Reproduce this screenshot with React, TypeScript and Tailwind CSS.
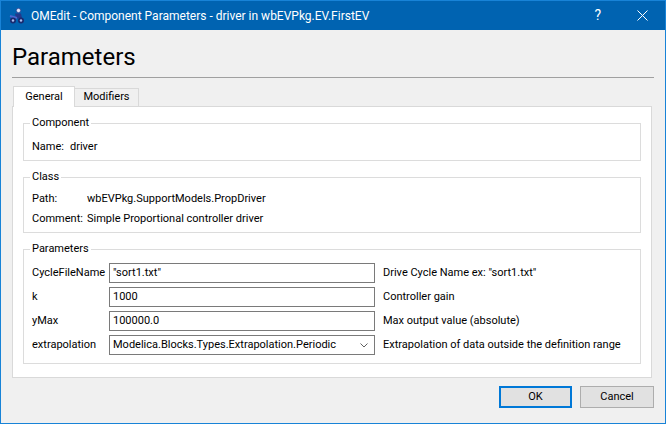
import React from "react";

const ui = "font-['Segoe_UI',Roboto,sans-serif]";

// 参数表的行
const params = [
  { name: "CycleFileName", value: '"sort1.txt"', desc: 'Drive Cycle Name ex: "sort1.txt"' },
  { name: "k", value: "1000", desc: "Controller gain" },
  { name: "yMax", value: "100000.0", desc: "Max output value (absolute)" },
];

function AppIcon() {
  return (
    <svg width="16" height="16" viewBox="0 0 16 16">
      <circle cx="9.5" cy="2.5" r="2.2" fill="#dfe6fb" stroke="#2a3f8f" strokeWidth="0.8" />
      <path d="M6 5.5 L12 5.5 L13 10 L7 10.5 Z" fill="#23388a" />
      <path d="M1 8 L8 10" stroke="#4c66d0" strokeWidth="2" />
      <circle cx="4" cy="12.5" r="3" fill="#1a2b70" />
      <circle cx="12" cy="12.5" r="3" fill="#1a2b70" />
      <circle cx="4" cy="12.5" r="1.2" fill="#aebfee" />
      <circle cx="12" cy="12.5" r="1.2" fill="#aebfee" />
    </svg>
  );
}

function GroupBox({
  title,
  className,
  children,
}: {
  title: string;
  className?: string;
  children: React.ReactNode;
}) {
  return (
    <fieldset className={`border border-[#dcdcdc] px-[8px] ${className ?? ""}`}>
      <legend className="-ml-[2px] px-[2px] h-[16px] leading-[16px]">{title}</legend>
      {children}
    </fieldset>
  );
}

export default function App() {
  return (
    <div className={`${ui} text-[11px] text-black w-[666px] h-[424px] border border-[#1883d7] bg-[#f0f0f0] flex flex-col`}>
      {/* title bar */}
      <div className="h-[29px] bg-[#0063b1] flex items-center text-white shrink-0">
        <div className="ml-[8px] w-[16px] h-[16px]">
          <AppIcon />
        </div>
        <span className="ml-[6px] text-[12px]">
          OMEdit - Component Parameters - driver in wbEVPkg.EV.FirstEV
        </span>
        <span className="ml-auto mr-[36px] text-[14px]">?</span>
        <svg className="mr-[17px]" width="11" height="11" viewBox="0 0 11 11">
          <path d="M0.5 0.5 L10.5 10.5 M10.5 0.5 L0.5 10.5" stroke="white" strokeWidth="1" />
        </svg>
      </div>

      <div className="pl-[11px] flex flex-col">
        <h1 className="mt-[11px] h-[32px] leading-[32px] text-[24px]">Parameters</h1>
        <div className="mt-[4px] w-[642px] h-px bg-[#a0a0a0]" />

        {/* tabs */}
        <div className="mt-[8px] h-[20px] flex items-end pl-[1px]">
          <div className="relative z-10 -mb-px h-[21px] w-[62px] bg-white border border-b-0 border-[#d9d9d9] flex items-center justify-center">
            General
          </div>
          <div className="h-[18px] w-[64px] bg-[#f0f0f0] border border-b-0 border-l-0 border-[#d9d9d9] flex items-center justify-center">
            Modifiers
          </div>
        </div>

        <div className="w-[640px] bg-white border border-[#d9d9d9] px-[10px] pt-[8px] pb-[13px] flex flex-col">
          <GroupBox title="Component" className="pt-[8px] pb-[5px]">
            <div className="h-[16px] leading-[16px] flex">
              <span className="w-[38px]">Name:</span>
              <span>driver</span>
            </div>
          </GroupBox>

          <GroupBox title="Class" className="mt-[8px] pt-[6px] pb-[5px]">
            <div className="flex flex-col gap-[4px]">
              <div className="h-[16px] leading-[16px] flex">
                <span className="w-[55px]">Path:</span>
                <span>wbEVPkg.SupportModels.PropDriver</span>
              </div>
              <div className="h-[16px] leading-[16px] flex">
                <span className="w-[55px]">Comment:</span>
                <span>Simple Proportional controller driver</span>
              </div>
            </div>
          </GroupBox>

          <GroupBox title="Parameters" className="mt-[8px] pt-[6px] pb-[8px]">
            <div className="flex flex-col gap-[4px]">
              {params.map(p => (
                <div key={p.name} className="h-[20px] flex items-center">
                  <span className="w-[77px]">{p.name}</span>
                  <div className="w-[266px] h-[20px] border border-[#7a7a7a] bg-white pl-[3px] flex items-center">
                    {p.value}
                  </div>
                  <span className="ml-[8px]">{p.desc}</span>
                </div>
              ))}
              <div className="h-[20px] flex items-center">
                <span className="w-[77px]">extrapolation</span>
                <div className="w-[266px] h-[20px] border border-[#7a7a7a] bg-white pl-[3px] pr-[6px] flex items-center justify-between">
                  <span>Modelica.Blocks.Types.Extrapolation.Periodic</span>
                  <svg width="8" height="5" viewBox="0 0 8 5">
                    <path d="M0.5 0.5 L4 4 L7.5 0.5" fill="none" stroke="#606060" strokeWidth="1" />
                  </svg>
                </div>
                <span className="ml-[8px]">Extrapolation of data outside the definition range</span>
              </div>
            </div>
          </GroupBox>
        </div>

        {/* buttons */}
        <div className="mt-[8px] w-[642px] flex justify-end gap-[8px]">
          <button className="w-[73px] h-[22px] bg-[#e1e1e1] border-2 border-[#0078d7]">OK</button>
          <button className="w-[74px] h-[22px] bg-[#e1e1e1] border border-[#adadad]">Cancel</button>
        </div>
      </div>
    </div>
  );
}
